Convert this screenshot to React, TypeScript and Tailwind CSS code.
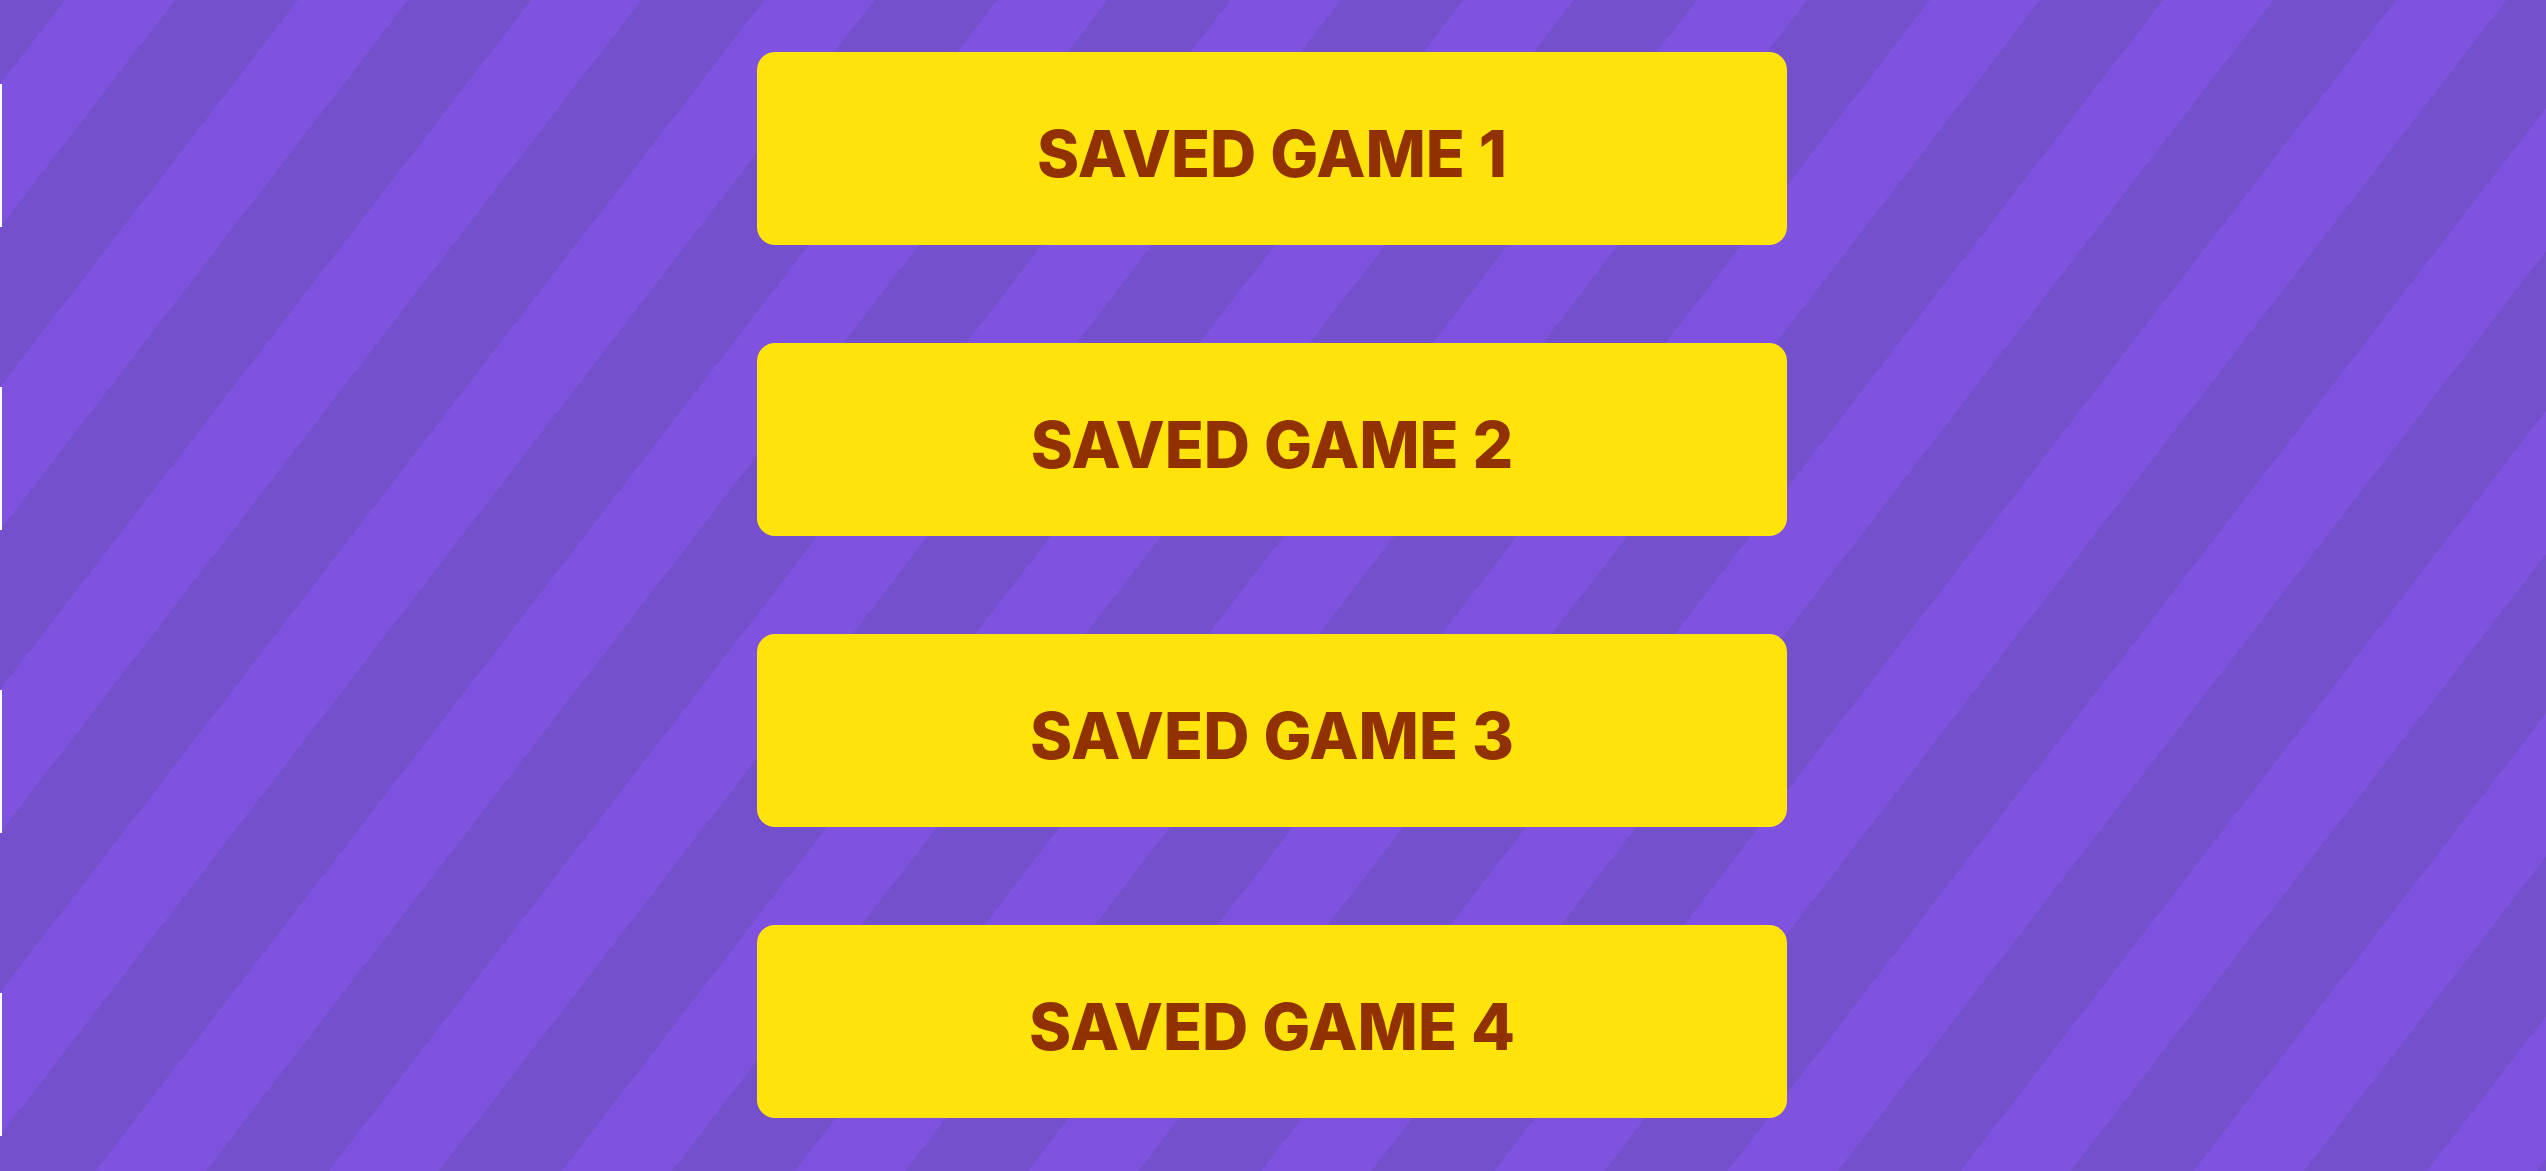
import React from "react";

const games = ["SAVED GAME 1", "SAVED GAME 2", "SAVED GAME 3", "SAVED GAME 4"];

export default function App() {
  return (
    <div className="min-h-screen w-full [background:repeating-linear-gradient(180deg,transparent_0px,transparent_84px,#ffffff_84px,#ffffff_227px,transparent_227px,transparent_303px)_left_top/2px_100%_no-repeat,repeating-linear-gradient(127.6deg,#7550cc_0px,#7550cc_51.5px,#7f53e0_51.5px,#7f53e0_138.7px,#7550cc_138.7px,#7550cc_184.7px)]">
      <div className="flex flex-col items-center gap-[98px] pt-[52px] pr-[2px] pb-[53px]">
        {games.map((g) => (
          <button
            key={g}
            className="flex h-[193px] w-[1030px] items-center justify-center rounded-[18px] bg-[#ffe30b] pt-[11px] font-['Inter',sans-serif] text-[64px] leading-none font-extrabold text-[#923100]"
          >
            {g}
          </button>
        ))}
      </div>
    </div>
  );
}
